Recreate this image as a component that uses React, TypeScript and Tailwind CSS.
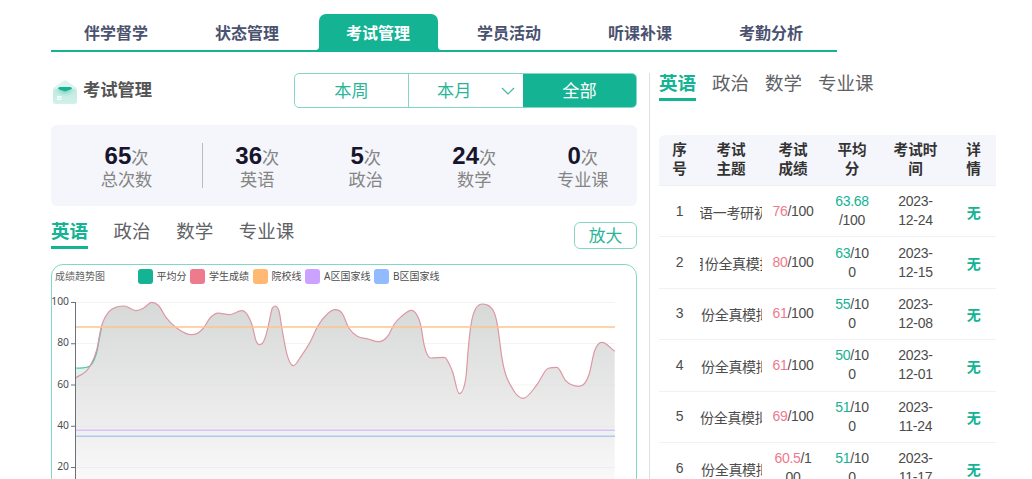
import React from "react";

const tabs = ["伴学督学", "状态管理", "考试管理", "学员活动", "听课补课", "考勤分析"];

const subjects = ["英语", "政治", "数学", "专业课"];

const stats = [
  { value: 36, label: "英语" },
  { value: 5, label: "政治" },
  { value: 24, label: "数学" },
  { value: 0, label: "专业课" },
];

const legend = [
  { label: "平均分", color: "bg-[#14b393]", width: "w-[52.5px]" },
  { label: "学生成绩", color: "bg-[#ee7a8e]", width: "w-[62.5px]" },
  { label: "院校线", color: "bg-[#ffb973]", width: "w-[52.5px]" },
  { label: "A区国家线", color: "bg-[#cba2ff]", width: "w-[69px]" },
  { label: "B区国家线", color: "bg-[#92baff]", width: "w-[69px]" },
];

type Row = {
  topic: string;
  indent: string;
  score: string;
  scoreRest: string[];
  avg: string;
  avgRest: string[];
  date: string;
};

const rows: Row[] = [
  { topic: "语一考研初试", indent: "-indent-[1px]", score: "76", scoreRest: ["/100"], avg: "63.68", avgRest: ["", "/100"], date: "12-24" },
  { topic: "月份全真模拟", indent: "-indent-[9px]", score: "80", scoreRest: ["/100"], avg: "63", avgRest: ["/10", "0"], date: "12-15" },
  { topic: "份全真模拟", indent: "indent-[1px]", score: "61", scoreRest: ["/100"], avg: "55", avgRest: ["/10", "0"], date: "12-08" },
  { topic: "份全真模拟", indent: "indent-[1px]", score: "61", scoreRest: ["/100"], avg: "50", avgRest: ["/10", "0"], date: "12-01" },
  { topic: "份全真模拟", indent: "indent-[0px]", score: "69", scoreRest: ["/100"], avg: "51", avgRest: ["/10", "0"], date: "11-24" },
  { topic: "份全真模拟", indent: "indent-[1px]", score: "60.5", scoreRest: ["/1", "00"], avg: "51", avgRest: ["/10", "0"], date: "11-17" },
];

const headers = [["序", "号"], ["考试", "主题"], ["考试", "成绩"], ["平均", "分"], ["考试时", "间"], ["详", "情"]];

const cols = "grid grid-cols-[41px_62px_62px_56px_71px_45px]";

const points: [number, number][] = [
  [75.7, 378], [90, 366], [96.7, 350], [101, 328.3], [109, 311.7], [116.7, 307], [124.3, 306], [135.7, 310.7],
  [143.3, 308.3], [151.7, 302.3], [158.3, 305.3], [166, 317.3], [176.7, 328], [191.7, 334.7], [202.7, 329],
  [210.7, 317.3], [218.3, 313.2], [229.3, 314.7], [241.7, 310.7], [247.3, 314.7], [252.3, 325.7], [256, 340.7],
  [259.7, 344.7], [265, 338.3], [268.7, 324], [272.3, 308.3], [275, 306], [279, 311], [282, 329], [286.7, 353.3],
  [293.3, 365.7], [301.7, 355.3], [310, 342.3], [317.7, 326.3], [327.3, 314], [335, 309.7], [341.7, 312.7],
  [349, 328.3], [357.3, 336.3], [368.3, 339], [378.3, 341.7], [388.3, 335.3], [394.3, 324], [401.7, 316.3],
  [411, 310.3], [417.3, 315.7], [420.7, 325], [424, 344.3], [431, 358], [444.3, 357.3], [452.3, 371],
  [459.3, 393.7], [465.7, 379], [468.3, 348.3], [470.7, 326.7], [476, 308], [482.7, 304], [490, 306.7],
  [497.3, 324.3], [502, 358.3], [512.7, 389], [523.3, 398.3], [536.7, 385], [548.3, 368.3], [557, 367.3],
  [565.7, 380.7], [579, 386.3], [589.3, 373.7], [594.3, 351.7], [602, 342.3], [614.7, 351.3],
];

// Cubic interpolation with tangents limited so the line never overshoots its own data.
function smoothPath(p: [number, number][]) {
  const n = p.length;
  const slope = p.slice(1).map((q, i) => (q[1] - p[i][1]) / (q[0] - p[i][0]));
  const m = p.map((_, i) => {
    if (i === 0) return slope[0];
    if (i === n - 1) return slope[n - 2];
    const a = slope[i - 1];
    const b = slope[i];
    if (a * b <= 0) return 0;
    const ha = p[i][0] - p[i - 1][0];
    const hb = p[i + 1][0] - p[i][0];
    const mean = Math.abs((a * hb + b * ha) / (ha + hb));
    return Math.sign(a) * Math.min(mean, 2.6 * Math.abs(a), 2.6 * Math.abs(b));
  });
  let d = `M${p[0][0]},${p[0][1]}`;
  for (let i = 0; i < n - 1; i++) {
    const h = (p[i + 1][0] - p[i][0]) / 3;
    d += `C${p[i][0] + h},${p[i][1] + m[i] * h} ${p[i + 1][0] - h},${p[i + 1][1] - m[i + 1] * h} ${p[i + 1][0]},${p[i + 1][1]}`;
  }
  return d;
}

const line = smoothPath(points);
const avgLine = "M75.7,368C82,368 86,368.6 90,366C93,363 96,356 97.5,349C99,341 100,334 101.5,328";

function MailIcon() {
  return (
    <svg width="24" height="24" viewBox="0 0 24 24" className="shrink-0">
      <defs>
        <linearGradient id="mail" x1="0" y1="0" x2="0" y2="1">
          <stop offset="0" stopColor="#b5e7dc" />
          <stop offset="1" stopColor="#cdf0e8" />
        </linearGradient>
        <radialGradient id="mailGlow" cx="0.5" cy="0.15" r="0.55">
          <stop offset="0" stopColor="#5cc9b1" />
          <stop offset="1" stopColor="#b4e7dc" stopOpacity="0" />
        </radialGradient>
      </defs>
      <path d="M10.4 0.8Q12 -0.3 13.6 0.8L23 7.6Q24 8.4 24 10V21Q24 24 21 24H3Q0 24 0 21V10Q0 8.4 1 7.6Z" fill="#dcf3ee" />
      <path d="M0 12Q0 9 3 9H21Q24 9 24 12V21Q24 24 21 24H3Q0 24 0 21Z" fill="url(#mail)" opacity="0.7" />
      <path d="M2 8H22V21H2Z" fill="url(#mailGlow)" />
      <path d="M5 8.6Q5 7 7 7H17Q19 7 19 8.6Q17.5 10 12 11.3Q6.500 10 5 8.600Z" fill="#12b392" />
      <path d="M4 16H8.500V17.800H4ZM4 18.400H8.500V20.100H4Z" fill="#f3fffc" />
    </svg>
  );
}

function Subjects({ gap }: { gap: string }) {
  return (
    <div className={`flex text-[18.5px] leading-[30px] text-[#606266] ${gap}`}>
      {subjects.map((s, i) => (
        <div key={s} className={i === 0 ? "h-8 border-b-[3px] border-[#14b393] font-bold text-[#14b393]" : "h-8"}>
          {s}
        </div>
      ))}
    </div>
  );
}

function Stat({ value, label }: { value: number; label: string }) {
  return (
    <div className="flex flex-col items-center text-[17.2px] text-[#858585]">
      <div className="flex h-[26px] items-baseline leading-[27px]">
        <span className="text-[24px] font-bold text-[#17152b]">{value}</span>
        <span>次</span>
      </div>
      <div className="leading-[24px]">{label}</div>
    </div>
  );
}

function Chart() {
  return (
    <svg width="584" height="188" viewBox="52 291 584 188" className="block">
      <defs>
        <linearGradient id="area" gradientUnits="userSpaceOnUse" x1="0" y1="302" x2="0" y2="508">
          <stop offset="0" stopColor="#d7d8d8" />
          <stop offset="0.6" stopColor="#eeeeee" />
          <stop offset="1" stopColor="#ffffff" />
        </linearGradient>
      </defs>
      <path d={`${avgLine}L101,378L75.7,378Z`} fill="#dff3ec" />
      <path d={`${line}V509H75.7Z`} fill="url(#area)" />
      {[302.5, 343.5, 385, 426.5, 467.5].map((y) => (
        <path key={y} d={`M76,${y}H615`} stroke="#e0e0e8" strokeOpacity="0.4" />
      ))}
      <path d={avgLine} fill="none" stroke="#4fc5ac" strokeWidth="1.2" />
      <path d={line} fill="none" stroke="#dc98a3" strokeWidth="1.2" />
      <path d="M76,327H615" stroke="#fcc58c" strokeWidth="1.5" />
      <path d="M76,430.2H615" stroke="#dac3f5" strokeWidth="1.5" />
      <path d="M76,436.3H615" stroke="#adc8f4" strokeWidth="1.5" />
      <path d="M75.5,302V479" stroke="#6e7079" />
      {[100, 80, 60, 40, 20].map((v, i) => (
        <g key={v}>
          <path d={`M71,${302.5 + i * 41.25}H76`} stroke="#6e7079" />
          <text x="69" y={305 + i * 41.3} textAnchor="end" fontSize="10.3" fill="#4c4d53" className="font-['Noto_Sans',sans-serif]">
            {v}
          </text>
        </g>
      ))}
    </svg>
  );
}

export default function App() {
  return (
    <div className="h-[479px] w-[1032px] overflow-hidden bg-white pl-[51px] font-['Liberation_Sans','Noto_Sans_CJK_SC',sans-serif]">
      <nav className="flex h-[52px] w-[786px] border-b-2 border-[#14b393] pt-[14px]">
        {tabs.map((t, i) => (
          <div key={t} className="flex w-[131px] shrink-0 justify-center pr-[1px]">
            {i === 2 ? (
              <div className="relative h-[38px] w-[119px] shrink-0 rounded-t-[7px] bg-[#14b393] text-center text-[16px] leading-[40px] font-bold text-white">
                {t}
                <svg width="125" height="4" viewBox="0 0 125 4" className="absolute bottom-[2px] -left-[3px]">
                  <path d="M0 4Q3 4 3 0V4ZM125 4Q122 4 122 0V4Z" fill="#14b393" />
                </svg>
              </div>
            ) : (
              <div className="text-[16px] leading-[40px] font-bold text-[#4b5270]">{t}</div>
            )}
          </div>
        ))}
      </nav>

      <div className="flex pt-[21px]">
        <main className="w-[586px] shrink-0">
          <div className="flex h-[35px] items-center justify-between">
            <div className="flex items-center gap-[6px] pl-[2px]">
              <div className="pt-[2px]">
                <MailIcon />
              </div>
              <h1 className="pb-[2px] text-[17.3px] leading-[32px] font-bold text-[#555555]">考试管理</h1>
            </div>
            <div className="flex h-[35px] w-[343px] overflow-hidden rounded-[5px] border border-[#84d7c5] text-[17.2px] leading-[34px] text-[#2bb598]">
              <div className="w-[114px] border-r border-[#84d7c5] text-center">本周</div>
              <div className="flex w-[114px] items-center pl-[28px]">
                本月
                <svg width="14" height="8" viewBox="0 0 14 8" className="ml-[30px]">
                  <path d="M1 1L7 7L13 1" fill="none" stroke="#3dbba1" strokeWidth="1.2" />
                </svg>
              </div>
              <div className="flex-1 bg-[#14b393] text-center text-white">全部</div>
            </div>
          </div>

          <section className="mt-[17px] flex h-[81px] rounded-[6px] bg-[#f5f6fb] pt-[17px]">
            <div className="w-[151px]">
              <Stat value={65} label="总次数" />
            </div>
            <div className="mt-[1px] h-[45px] w-px bg-[#b9bbc0]" />
            <div className="grid w-[434px] grid-cols-4">
              {stats.map((s) => (
                <Stat key={s.label} value={s.value} label={s.label} />
              ))}
            </div>
          </section>

          <div className="mt-[11px] flex justify-between">
            <Subjects gap="gap-[25.6px]" />
            <button className="mt-[5px] h-[27px] w-[63px] rounded-[6px] border border-[#84d7c5] text-[16.8px] leading-[27px] text-[#2bb598]">
              放大
            </button>
          </div>

          <section className="mt-[15px] h-[260px] rounded-[12px] border border-[#84d7c5]">
            <div className="flex h-[26px] pt-[4px] pl-[3px] text-[10px] leading-[15px] text-[#4d4d4d] font-['Noto_Sans','Noto_Sans_CJK_SC',sans-serif]">
              <div className="w-[82.5px] text-[#666666]">成绩趋势图</div>
              {legend.map((l) => (
                <div key={l.label} className={`flex shrink-0 gap-1 whitespace-nowrap ${l.width}`}>
                  <span className={`h-[15px] w-[15px] shrink-0 rounded-[3px] ${l.color}`} />
                  <span>{l.label}</span>
                </div>
              ))}
            </div>
            <Chart />
          </section>
        </main>

        <aside className="ml-3 h-[406px] w-[348px] shrink-0 border-l border-[#dedfe2] pl-[9px]">
          <div className="-mt-[4px]">
            <Subjects gap="gap-[16px]" />
          </div>
          <div className="mt-[34px] w-[337px] text-[14px] tracking-[-0.3px] text-[#4c4c4c]">
            <div className={`${cols} h-[51px] rounded-tl-[6px] border-b border-[#eff0f3] bg-[#f5f6fb] pt-[6px] text-center text-[14.6px] leading-[19.3px] font-bold tracking-normal text-[#333333]`}>
              {headers.map((h) => (
                <div key={h.join("")}>
                  {h[0]}
                  <br />
                  {h[1]}
                </div>
              ))}
            </div>
            {rows.map((r, i) => (
              <div key={i} className={`${cols} h-[51.4px] items-center border-b border-[#f0f1f4] text-center leading-[19px]`}>
                <div>{i + 1}</div>
                <div className={`overflow-hidden pt-1 text-left whitespace-nowrap ${r.indent}`}>{r.topic}</div>
                <div>
                  <span className="text-[#ee7a8e]">{r.score}</span>
                  {r.scoreRest[0]}
                  {r.scoreRest[1] && <div>{r.scoreRest[1]}</div>}
                </div>
                <div>
                  <span className="text-[#14b393]">{r.avg}</span>
                  {r.avgRest[0]}
                  <div>{r.avgRest[1]}</div>
                </div>
                <div>
                  2023-
                  <br />
                  {r.date}
                </div>
                <div className="pt-1 font-bold text-[#14b393]">无</div>
              </div>
            ))}
          </div>
        </aside>
      </div>
    </div>
  );
}
